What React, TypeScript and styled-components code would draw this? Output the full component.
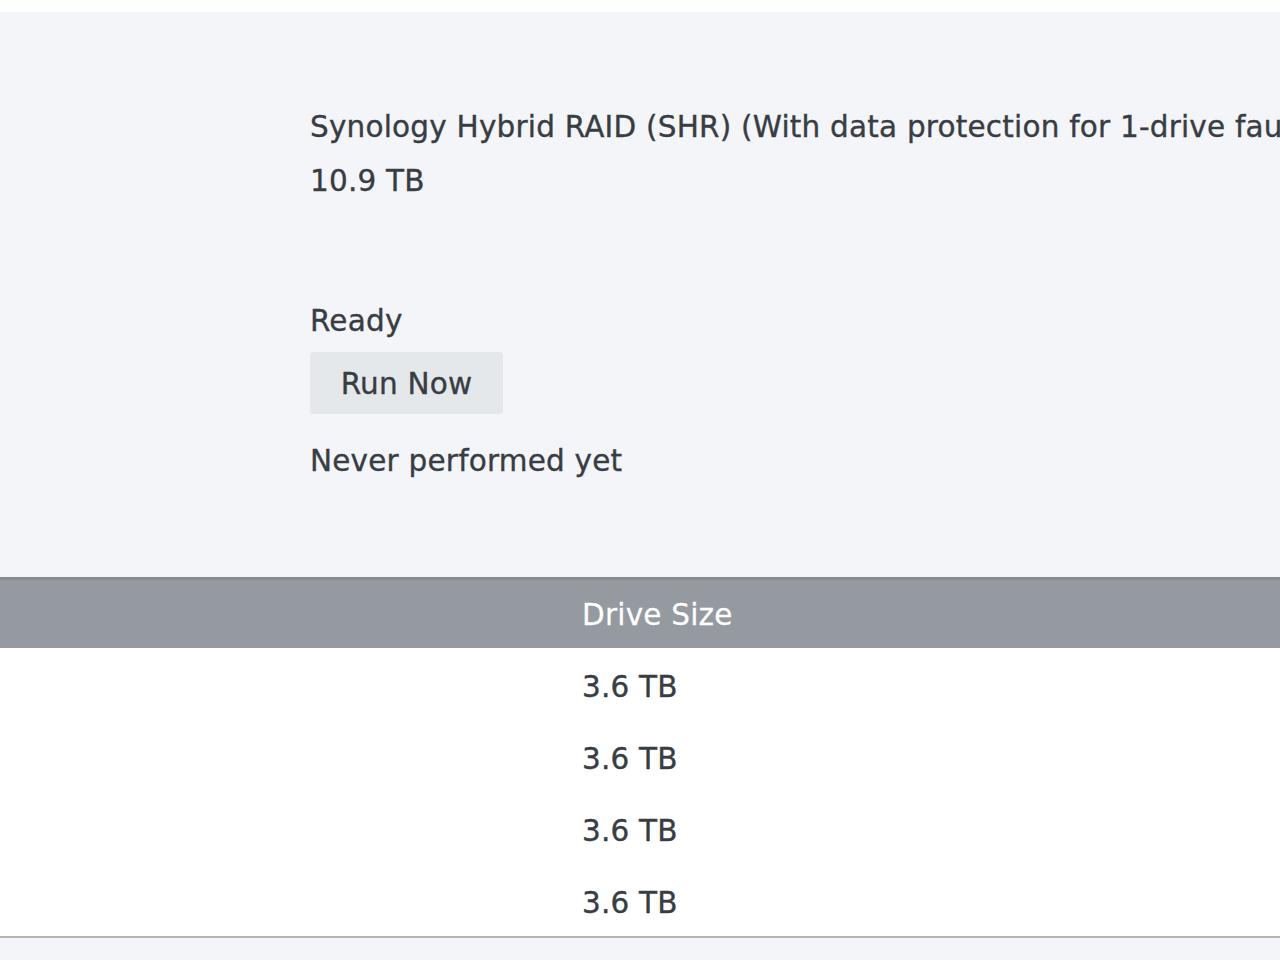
import React from 'react'
import styled, { createGlobalStyle } from 'styled-components'

const GlobalStyle = createGlobalStyle`
  html, body {
    margin: 0;
    padding: 0;
    background: #f4f5f9;
  }
  body {
    font-family: "DejaVu Sans", Verdana, sans-serif;
    color: #383d43;
    overflow: hidden;
    -webkit-text-stroke: 0.35px currentColor;
    letter-spacing: 0.2px;
  }
`

const Page = styled.div`
  width: 1280px;
  height: 960px;
  overflow: hidden;
  display: flex;
  flex-direction: column;
`

const TopStrip = styled.div`
  height: 12px;
  background: #fdfefe;
  flex-shrink: 0;
`

const InfoPanel = styled.div`
  background: #f4f5f9;
  padding: 88px 0 89px 310px;
  display: flex;
  flex-direction: column;
  white-space: nowrap;
  overflow: hidden;
`

const Field = styled.div<{ $gapAfter?: number }>`
  height: 54px;
  line-height: 54px;
  font-size: 29.5px;
  margin-bottom: ${p => p.$gapAfter ?? 0}px;
`

const RunButton = styled.button`
  align-self: flex-start;
  width: 193px;
  height: 62px;
  margin: 4px 0 20px;
  border: none;
  border-radius: 4px;
  background: #e5e8eb;
  color: #383d43;
  font-family: inherit;
  font-size: 29.5px;
  letter-spacing: 0.2px;
  padding: 2px 0 0;
  cursor: pointer;
`

const Table = styled.div`
  display: flex;
  flex-direction: column;
  background: #ffffff;
  border-bottom: 2px solid #b4b6b9;
`

const HeaderRow = styled.div`
  display: grid;
  grid-template-columns: 582px 1fr;
  height: 68px;
  background: #959aa0;
  border-top: 3px solid #898d92;
  align-items: center;
`

const HeaderCell = styled.div`
  color: #ffffff;
  font-size: 29.5px;
  padding-top: 2px;
  text-shadow: 0 0 1px rgba(0, 0, 0, 0.25);
`

const Row = styled.div`
  display: grid;
  grid-template-columns: 582px 1fr;
  height: 72px;
  align-items: center;
`

const Cell = styled.div`
  font-size: 29.5px;
  padding-top: 6px;
`

const Bottom = styled.div`
  flex: 1;
  background: #f4f5f9;
`

const drives = ['3.6 TB', '3.6 TB', '3.6 TB', '3.6 TB']

export default function App() {
  return (
    <Page>
      <GlobalStyle />
      <TopStrip />
      <InfoPanel>
        <Field>Synology Hybrid RAID (SHR) (With data protection for 1-drive fault tolerance)</Field>
        <Field $gapAfter={86}>10.9 TB</Field>
        <Field>Ready</Field>
        <RunButton>Run Now</RunButton>
        <Field>Never performed yet</Field>
      </InfoPanel>
      <Table>
        <HeaderRow>
          <HeaderCell />
          <HeaderCell>Drive Size</HeaderCell>
        </HeaderRow>
        {drives.map((d, i) => (
          <Row key={i}>
            <Cell />
            <Cell>{d}</Cell>
          </Row>
        ))}
      </Table>
      <Bottom />
    </Page>
  )
}
